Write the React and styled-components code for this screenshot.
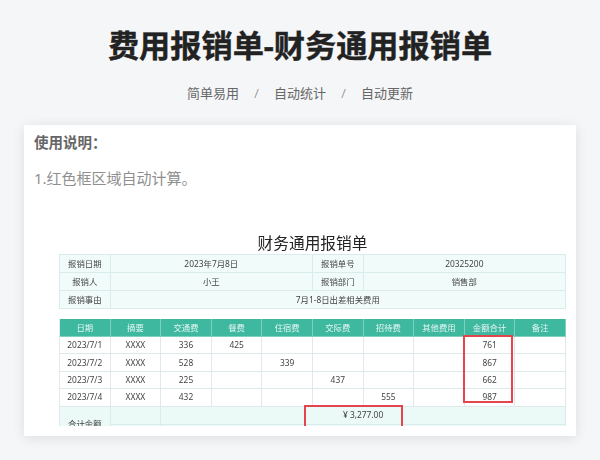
import React from "react";
import styled, { createGlobalStyle } from "styled-components";

const CJK = `"Noto Sans", "Noto Sans CJK SC", sans-serif`;

const Global = createGlobalStyle`
  html, body { margin: 0; padding: 0; background: #f5f6f8; }
  body { font-family: ${CJK}; width: 600px; height: 460px; overflow: hidden; }
`;

const Page = styled.div`
  width: 600px;
  height: 460px;
  display: flex;
  flex-direction: column;
  align-items: center;
  background: #f5f6f8;
`;

const Title = styled.h1`
  margin: 23px 0 0;
  font-size: 31.2px;
  line-height: 44px;
  font-weight: 700;
  color: #222;
  text-align: center;
  -webkit-text-stroke: 0.4px #222;
`;

const Tags = styled.div`
  margin-top: 15px;
  height: 22px;
  display: flex;
  align-items: center;
  gap: 13px;
  font-size: 13px;
  line-height: 22px;
  color: #666;
`;

const Slash = styled.span`
  width: 9px;
  text-align: center;
  color: #777;
  font-size: 13px;
  font-weight: 300;
`;

const Card = styled.section`
  margin-top: 21px;
  width: 552px;
  height: 311px;
  box-sizing: border-box;
  padding: 7px 11px 10px 10px;
  background: #fff;
  box-shadow: 0 2px 12px rgba(0, 0, 0, 0.1);
  display: flex;
  flex-direction: column;
`;

const Heading = styled.div`
  font-size: 14.5px;
  line-height: 20px;
  font-weight: 700;
  color: #666;
`;

const Note = styled.div`
  margin-top: 15px;
  font-size: 15px;
  line-height: 22px;
  color: #8f8f8f;
`;

const Sheet = styled.div`
  position: relative;
  flex: 1;
  min-height: 0;
  width: 507px;
  margin: 42px 0 0 25px;
  overflow: hidden;
  filter: blur(0.3px);
`;

const SheetTitle = styled.div`
  height: 23px;
  font-size: 15.7px;
  line-height: 24px;
  text-align: center;
  color: #222;
`;

const Grid = styled.div`
  display: grid;
  grid-template-columns: repeat(10, 1fr);
  border-left: 1px solid #d8ecec;
  border-top: 1px solid #d8ecec;
  margin-bottom: 10px;
`;

const Cell = styled.div`
  grid-column: span ${(p) => p.$span || 1};
  grid-row: span ${(p) => p.$rows || 1};
  min-height: 17px;
  display: flex;
  align-items: center;
  justify-content: center;
  font-size: 8.4px;
  line-height: 12px;
  color: #444;
  background: ${(p) => p.$bg || "#fff"};
  border-right: 1px solid #d8ecec;
  border-bottom: 1px solid #d8ecec;
`;

const DataCell = styled(Cell)`
  min-height: 16.4px;
  border-color: #dfe8ea;
`;

const HeadCell = styled(Cell)`
  color: #e4f6f2;
  background: #3fb8a0;
  border-color: #7fd0bf;
`;

const DataGrid = styled(Grid)`
  border-top: none;
  border-left: 1px solid #dfe8ea;
  margin-bottom: 0;
`;

const RedBox = styled.div`
  position: absolute;
  box-sizing: border-box;
  border: 2px solid #e2454d;
  left: ${(p) => p.$left}px;
  top: ${(p) => p.$top}px;
  width: ${(p) => p.$width}px;
  height: ${(p) => p.$height}px;
`;

const heads = ["日期", "摘要", "交通费", "餐费", "住宿费", "交际费", "招待费", "其他费用", "金额合计", "备注"];
const rows = [
  ["2023/7/1", "XXXX", "336", "425", "", "", "", "", "761", ""],
  ["2023/7/2", "XXXX", "528", "", "339", "", "", "", "867", ""],
  ["2023/7/3", "XXXX", "225", "", "", "437", "", "", "662", ""],
  ["2023/7/4", "XXXX", "432", "", "", "", "555", "", "987", ""],
];
const tint = "#f1fbfa";
const totalTint = "#ebf9f7";

export default function App() {
  return (
    <Page>
      <Global />
      <Title>费用报销单-财务通用报销单</Title>
      <Tags>
        <span>简单易用</span>
        <Slash>/</Slash>
        <span>自动统计</span>
        <Slash>/</Slash>
        <span>自动更新</span>
      </Tags>
      <Card>
        <Heading>使用说明：</Heading>
        <Note>1.红色框区域自动计算。</Note>
        <Sheet>
          <SheetTitle>财务通用报销单</SheetTitle>
          <Grid>
            <Cell $bg={tint}>报销日期</Cell>
            <Cell $span={4} $bg={tint}>2023年7月8日</Cell>
            <Cell $bg={tint}>报销单号</Cell>
            <Cell $span={4} $bg={tint}>20325200</Cell>
            <Cell $bg={tint}>报销人</Cell>
            <Cell $span={4} $bg={tint}>小王</Cell>
            <Cell $bg={tint}>报销部门</Cell>
            <Cell $span={4} $bg={tint}>销售部</Cell>
            <Cell $bg={tint}>报销事由</Cell>
            <Cell $span={9} $bg={tint}>7月1-8日出差相关费用</Cell>
          </Grid>
          <DataGrid>
            {heads.map((h) => (
              <HeadCell key={h}>{h}</HeadCell>
            ))}
            {rows.flatMap((r, i) => r.map((v, j) => <DataCell key={`${i}-${j}`}>{v}</DataCell>))}
            <Cell $rows={2} $bg={totalTint}>合计金额</Cell>
            <Cell $bg={totalTint} />
            <Cell $span={8} $bg={totalTint}>¥ 3,277.00</Cell>
            <Cell $bg={totalTint} />
            <Cell $span={8} $bg={totalTint} />
          </DataGrid>
          <RedBox $left={404} $top={104} $width={50} $height={68} />
          <RedBox $left={245} $top={174} $width={99} $height={40} />
        </Sheet>
      </Card>
    </Page>
  );
}
